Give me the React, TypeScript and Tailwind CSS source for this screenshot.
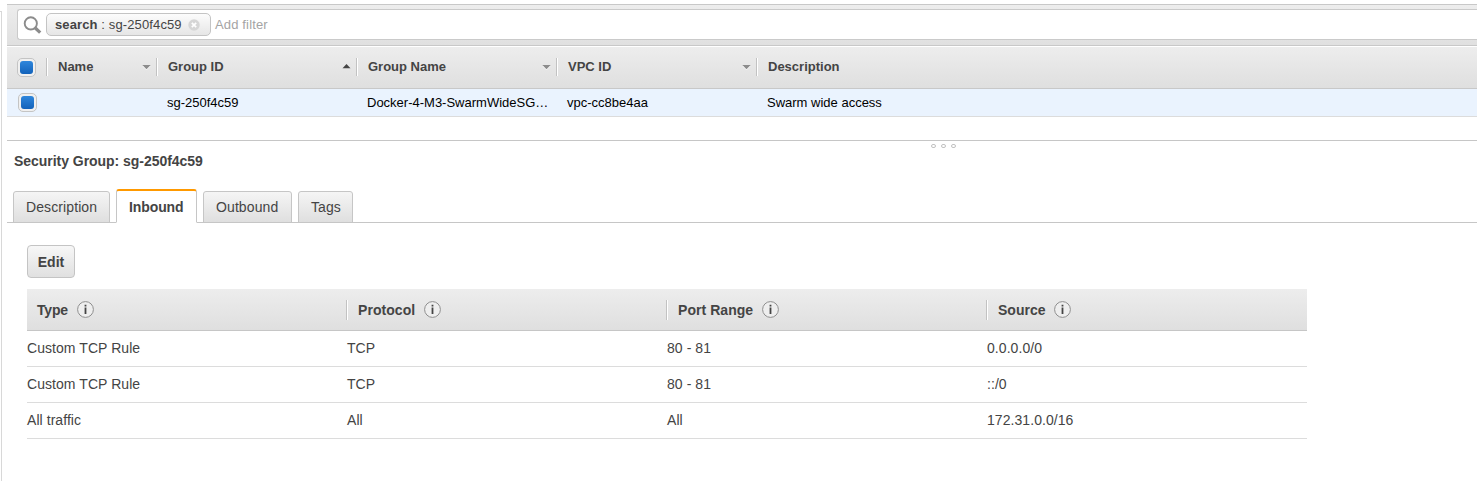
import type { ReactNode } from "react";

const columns = [
  { label: "Name", sort: "down", width: "w-[110px]" },
  { label: "Group ID", sort: "up", width: "w-[200px]" },
  { label: "Group Name", sort: "down", width: "w-[200px]" },
  { label: "VPC ID", sort: "down", width: "w-[200px]" },
  { label: "Description", sort: "none", width: "grow" },
];

const rules = [
  ["Custom TCP Rule", "TCP", "80 - 81", "0.0.0.0/0"],
  ["Custom TCP Rule", "TCP", "80 - 81", "::/0"],
  ["All traffic", "All", "All", "172.31.0.0/16"],
];

function SearchIcon() {
  return (
    <svg width="19" height="19" viewBox="0 0 19 19" fill="none" stroke="#8c8c8c" className="mt-px shrink-0">
      <circle cx="7.8" cy="7.4" r="6.1" strokeWidth="1.9" />
      <path d="M12.3 12 L17.2 16.6" strokeWidth="3.2" />
    </svg>
  );
}

function Checkbox() {
  return (
    <div className="flex h-[19px] w-[19px] shrink-0 items-center justify-center rounded-[5px] border border-[#c4c4c4] bg-[#f0f0f0]">
      <div className="h-[13px] w-[13px] rounded-[3px] bg-linear-to-b from-[#2e86dc] to-[#1262ba]" />
    </div>
  );
}

function Divider({ className }: { className: string }) {
  return <div className={`w-[2px] shrink-0 border-l border-[#c2c2c2] bg-white ${className}`} />;
}

function SortArrow({ dir }: { dir: string }) {
  if (dir === "none") return null;
  return (
    <svg width="9" height="6" viewBox="0 0 9 6" className="mr-[5px] shrink-0">
      {dir === "down" ? (
        <>
          <path d="M0.3 2 H8.7 L4.5 6 Z" fill="#fff" />
          <path d="M0.3 1 H8.7 L4.5 5.3 Z" fill="#8c8c8c" />
        </>
      ) : (
        <path d="M0.5 4.3 H8.5 L4.5 0 Z" fill="#444" />
      )}
    </svg>
  );
}

function InfoIcon() {
  return (
    <svg width="17" height="17" viewBox="0 0 17 17" className="shrink-0">
      <circle cx="8.5" cy="8.5" r="7.9" fill="#eee" stroke="#8f8f8f" />
      <path d="M7.6 3.8h1.8v1.8h-1.8z M7.6 6.6h1.8v6.4h-1.8z" fill="#444" />
    </svg>
  );
}

function Tab({ width, active, children }: { width: string; active?: boolean; children: ReactNode }) {
  return (
    <div
      className={`flex rounded-t-[3px] border border-[#c6c6c6] pl-[12px] ${width} ${
        active
          ? "h-[34px] border-t-2 border-t-[#f90] border-b-white bg-white pt-[6px] font-bold tracking-[-0.1px]"
          : "h-[32px] bg-linear-to-b from-[#f5f5f5] to-[#dfdfdf] pt-[5px] tracking-[0.1px]"
      }`}
    >
      <span className="leading-[20px]">{children}</span>
    </div>
  );
}

function RuleHeader({ label, first, tracking, gap }: { label: string; first?: boolean; tracking: string; gap: string }) {
  return (
    <div className="flex w-[320px] items-center">
      {first ? <div className="w-[10px]" /> : <Divider className="mr-[10px] ml-[-1px] h-[20px]" />}
      <span className={`pt-[1px] leading-[18px] font-bold ${tracking}`}>{label}</span>
      <div className={gap}>
        <InfoIcon />
      </div>
    </div>
  );
}

export default function App() {
  return (
    <div className="flex h-[481px] w-full overflow-hidden bg-white font-['Liberation_Sans',Arial,sans-serif] text-[14px] whitespace-nowrap text-[#444]">
      <div className="mt-[11px] mr-[5px] w-[2px] shrink-0 border-t border-r border-[#d8d8d8]" />
      <main className="flex min-w-0 grow flex-col pt-[4px]">
        <div className="flex h-[42px] shrink-0 border-y border-[#c8c8c8] bg-linear-to-b from-[#ededed] to-[#e0e0e0] pt-[4px] pl-[10px] text-[13px]">
          <div className="flex h-[31px] grow items-center rounded-l-[3px] border border-r-0 border-[#cacaca] bg-white pl-[5px]">
            <SearchIcon />
            <div className="ml-[4px] flex h-[23px] w-[165px] shrink-0 items-center rounded-[5px] border border-[#c4c4c4] bg-linear-to-b from-[#fcfcfc] to-[#e6e6e6] pl-[8px]">
              <span className="tracking-[0.12px]">
                <b>search</b> : sg-250f4c59
              </span>
              <svg width="12" height="12" viewBox="0 0 12 12" className="ml-[6px]">
                <circle cx="6" cy="6" r="5.7" fill="#d6d6d6" />
                <path d="M3.8 3.8 8.2 8.2M8.2 3.8 3.8 8.2" stroke="#fff" strokeWidth="1.7" />
              </svg>
            </div>
            <span className="ml-[4px] tracking-[0.15px] text-[#a4a4a4]">Add filter</span>
          </div>
        </div>

        <div className="flex h-[43px] shrink-0 items-start border-t border-b border-t-white border-b-[#c8c8c8] bg-linear-to-b from-[#ededed] to-[#dfdfdf] pt-[11px] pl-[10px] text-[13px] font-bold">
          <Checkbox />
          <div className="w-[10px]" />
          {columns.map((column) => (
            <div key={column.label} className={`flex h-[18px] items-center ${column.width}`}>
              <Divider className="mr-[10px] h-[18px]" />
              <span className="grow leading-[18px]">{column.label}</span>
              <SortArrow dir={column.sort} />
            </div>
          ))}
        </div>

        <div className="flex h-[28px] shrink-0 items-center border-b border-[#dcdcdc] bg-[#eaf3fe] pl-[11px] text-[13px] text-black">
          <Checkbox />
          <div className="w-[130px]" />
          <span className="w-[200px]">sg-250f4c59</span>
          <span className="w-[200px]">Docker-4-M3-SwarmWideSG…</span>
          <span className="w-[200px]">vpc-cc8be4aa</span>
          <span>Swarm wide access</span>
        </div>

        <div className="mt-[23px] h-[8px] shrink-0 border-t border-[#c6c6c6] pt-[3px] pl-[924px]">
          <div className="flex gap-[5px]">
            <i className="h-[4px] w-[5px] rounded-[2px] border border-[#c2c2c2]" />
            <i className="h-[4px] w-[5px] rounded-[2px] border border-[#c2c2c2]" />
            <i className="h-[4px] w-[5px] rounded-[2px] border border-[#c2c2c2]" />
          </div>
        </div>
        <h1 className="mt-[3px] shrink-0 pl-[7px] text-[14px] leading-[20px] font-bold tracking-[-0.04px]">
          Security Group: sg-250f4c59
        </h1>

        <div className="mt-[17px] flex h-[35px] shrink-0 items-end border-b border-[#c6c6c6] pl-[6px]">
          <div className="mb-[-1px] flex items-end gap-[6px]">
            <Tab width="w-[97px]">Description</Tab>
            <Tab width="w-[81px]" active>Inbound</Tab>
            <Tab width="w-[89px]">Outbound</Tab>
            <Tab width="w-[55px]">Tags</Tab>
          </div>
        </div>

        <section className="pt-[22px] pl-[20px]">
          <button className="flex h-[33px] w-[48px] items-center justify-center rounded-[4px] border border-[#c4c4c4] bg-linear-to-b from-[#f7f7f7] to-[#e0e0e0] pt-[2px] font-bold">
            Edit
          </button>
          <div className="mt-[11px] w-[1280px]">
            <div className="flex h-[42px] items-center border-b border-[#c6c6c6] bg-linear-to-b from-[#ededed] to-[#dfdfdf]">
              <RuleHeader label="Type" first tracking="tracking-[-0.2px]" gap="ml-[9px]" />
              <RuleHeader label="Protocol" tracking="tracking-[0.05px]" gap="ml-[9px]" />
              <RuleHeader label="Port Range" tracking="tracking-[0.05px]" gap="ml-[9px]" />
              <RuleHeader label="Source" tracking="tracking-[0px]" gap="ml-[9px]" />
            </div>
            {rules.map((rule, index) => (
              <div key={index} className="flex h-[36px] items-center border-b border-[#dcdcdc]">
                {rule.map((cell, i) => (
                  <span key={i} className="w-[320px] tracking-[0.06px]">{cell}</span>
                ))}
              </div>
            ))}
          </div>
        </section>
      </main>
    </div>
  );
}
